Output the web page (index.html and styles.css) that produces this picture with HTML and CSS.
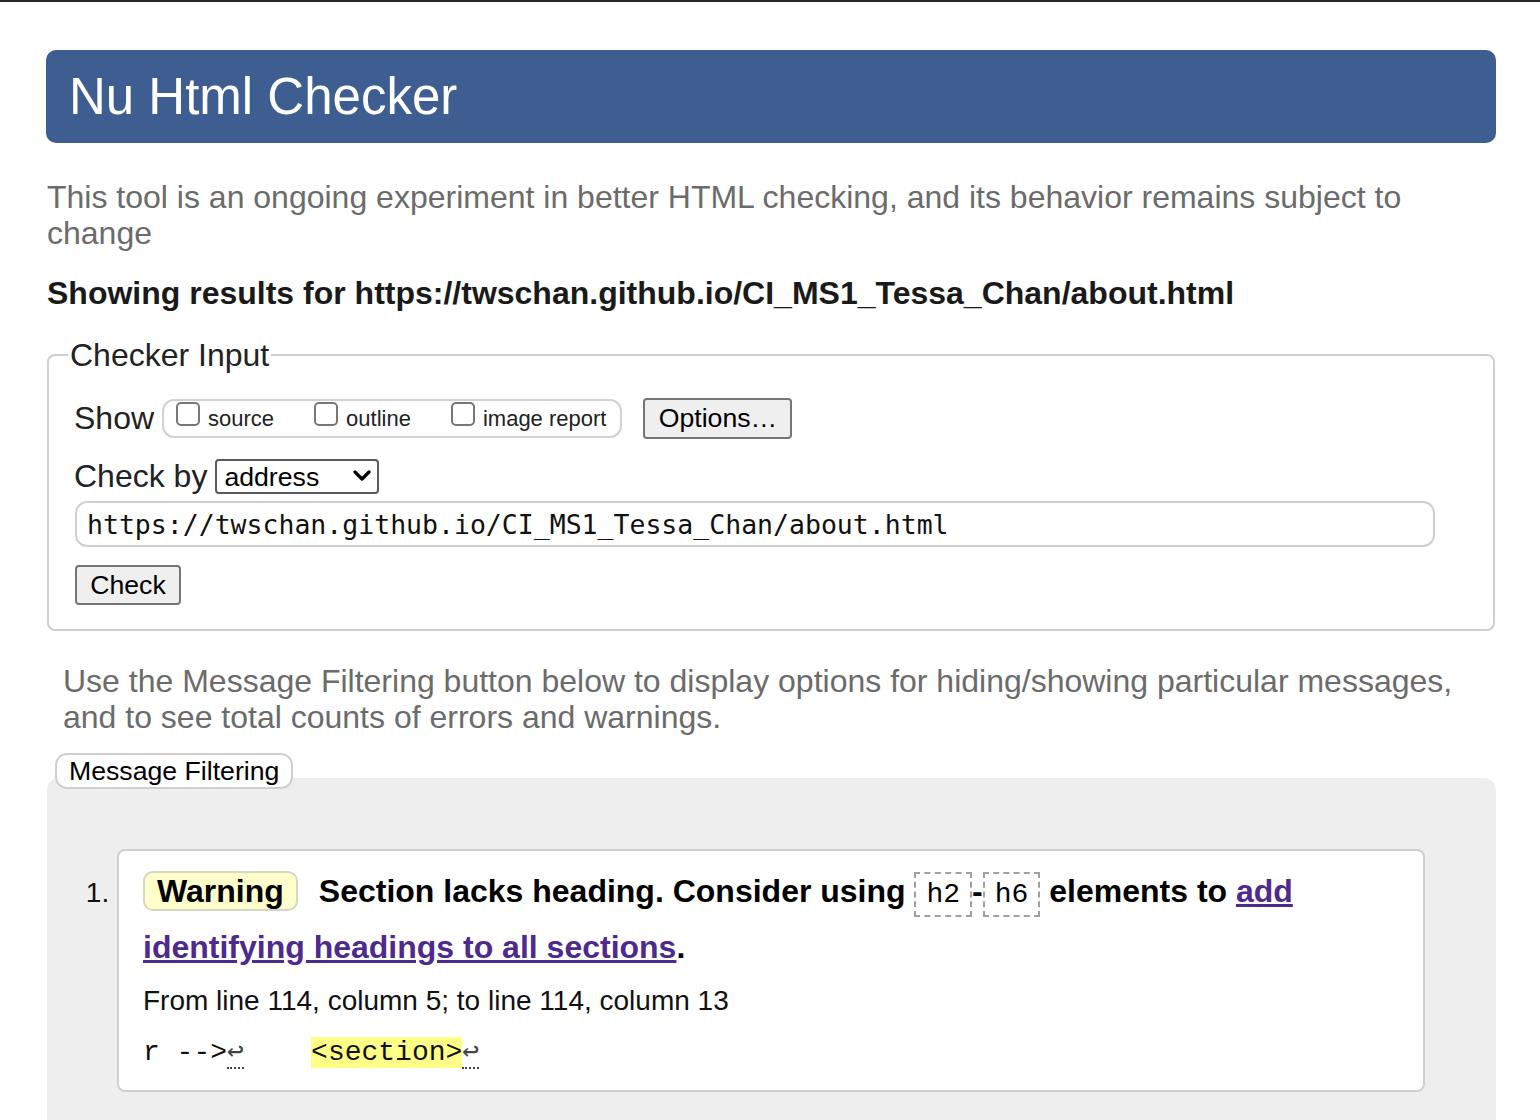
FILE: index.html
```html
<!DOCTYPE html>
<html lang="en">
<head>
<meta charset="utf-8">
<title>Showing results for https://twschan.github.io/CI_MS1_Tessa_Chan/about.html - Nu Html Checker</title>
<link rel="stylesheet" href="styles.css">
</head>
<body>
<div class="page">
  <header class="masthead"><h1>Nu Html Checker</h1></header>
  <p class="intro">This tool is an ongoing experiment in better HTML checking, and its behavior remains subject to change</p>
  <h2 class="results-for">Showing results for https://twschan.github.io/CI_MS1_Tessa_Chan/about.html</h2>
  <form class="checker">
    <fieldset class="input-fs">
      <legend>Checker Input</legend>
      <div class="row show-row">
        <span class="lbl">Show</span>
        <span class="opts">
          <label class="opt"><input type="checkbox"><span>source</span></label>
          <label class="opt"><input type="checkbox"><span>outline</span></label>
          <label class="opt"><input type="checkbox"><span>image report</span></label>
        </span>
        <button type="button" class="btn options">Options…</button>
      </div>
      <div class="row by-row">
        <span class="lbl">Check by</span>
        <span class="select-wrap">
          <select class="by-select"><option>address</option></select>
          <svg class="chev" width="18" height="12" viewBox="0 0 18 12" aria-hidden="true"><path d="M2 2 L9 9 L16 2" fill="none" stroke="#000" stroke-width="3.2" stroke-linecap="round" stroke-linejoin="round"/></svg>
        </span>
      </div>
      <input class="url" type="url" value="https://twschan.github.io/CI_MS1_Tessa_Chan/about.html">
      <button type="button" class="btn check">Check</button>
    </fieldset>
  </form>
  <p class="filter-note">Use the Message Filtering button below to display options for hiding/showing particular messages, and to see total counts of errors and warnings.</p>
  <button type="button" class="filter-btn">Message Filtering</button>
  <section class="results">
    <ol class="msgs">
      <li class="msg">
        <p class="msg-text"><strong class="badge">Warning</strong><span class="text">Section lacks heading. Consider using <code>h2</code>-<code>h6</code> elements to <a href="#">add identifying headings to all sections</a>.</span></p>
        <p class="loc">From line 114, column 5; to line 114, column 13</p>
        <p class="extract"><code>r --&gt;<b class="lf">↩</b>    <mark>&lt;section&gt;</mark><b class="lf">↩</b></code></p>
      </li>
    </ol>
  </section>
</div>
</body>
</html>
```
FILE: styles.css
```css
* { box-sizing: border-box; }
html, body { margin: 0; padding: 0; background: #fff; }
body {
  border-top: 2px solid #262626;
  font-family: "Liberation Sans", Arial, Helvetica, sans-serif;
  color: #222;
  font-size: 32px;
}
.page { margin: 0 44px 0 46px; padding-top: 48px; }

.masthead {
  background: #3e5e91;
  border-radius: 10px;
  height: 93px;
  display: flex;
  align-items: center;
  padding-left: 23px;
}
.masthead h1 { margin: 0; color: #fff; font-weight: normal; font-size: 51px; line-height: 1; }

.intro { margin: 36px 0 0 1px; font-size: 32px; line-height: 36px; color: #6b6b6b; }
.results-for { margin: 24px 0 0 1px; font-size: 32px; line-height: 36px; font-weight: bold; color: #1a1a1a; }

.checker { margin: 26px 1px 0 1px; }
.input-fs {
  margin: 0;
  border: 2px solid #cfcfcf;
  border-radius: 8px;
  padding: 25px 19px 24px 19px;
  min-width: 0;
}
.input-fs legend { padding: 0 2px; font-size: 32px; line-height: 36px; color: #222; }

.row { display: flex; align-items: center; margin-left: 6px; }
.lbl { font-size: 32px; color: #222; }
.show-row { height: 41px; }
.opts {
  display: inline-flex;
  align-items: center;
  height: 39px;
  margin-left: 8px;
  padding: 0 14px 0 12px;
  border: 2px solid #d2d2d2;
  border-radius: 12px;
}
.opt { display: inline-flex; align-items: center; font-size: 22px; color: #222; margin-right: 40px; }
.opt:last-child { margin-right: 0; }
.opt input {
  appearance: none;
  -webkit-appearance: none;
  width: 24px;
  height: 24px;
  margin: 0 8px 10px 0;
  border: 2px solid #777;
  border-radius: 5px;
  background: #fff;
}

.btn {
  font-family: "Liberation Sans", Arial, sans-serif;
  font-size: 26.67px;
  color: #000;
  background: #efefef;
  border: 2px solid #767676;
  border-radius: 4px;
  padding: 0 13px;
}
.options { margin-left: 21px; height: 41px; width: 149px; }

.by-row { margin-top: 20px; height: 35px; }
.select-wrap { position: relative; display: flex; margin-left: 8px; height: 35px; }
.by-select {
  appearance: none;
  -webkit-appearance: none;
  display: block;
  width: 164px;
  height: 35px;
  font-family: "Liberation Sans", Arial, sans-serif;
  font-size: 26.67px;
  color: #000;
  background: #fff;
  border: 2px solid #5a5a5a;
  border-radius: 4px;
  padding: 0 0 0 7px;
}
.chev { position: absolute; right: 8px; top: 11px; pointer-events: none; }

.url {
  display: block;
  margin: 7px 0 0 7px;
  width: 1360px;
  height: 46px;
  border: 2px solid #cfcfcf;
  border-radius: 12px;
  padding: 0 10px;
  font-family: "DejaVu Sans Mono", "Liberation Mono", monospace;
  font-size: 26.5px;
  color: #111;
}
.check { display: block; margin: 18px 0 0 7px; height: 40px; width: 106px; }

.filter-note { margin: 32px 0 0 17px; font-size: 32px; line-height: 36px; color: #6b6b6b; }
.filter-btn {
  position: relative;
  z-index: 1;
  display: block;
  margin: 18px 0 0 9px;
  height: 36px;
  padding: 0 12px;
  font-family: "Liberation Sans", Arial, sans-serif;
  font-size: 26.67px;
  color: #000;
  background: #fff;
  border: 2px solid #cfcfcf;
  border-radius: 12px;
}

.results {
  margin: -11px 0 0 1px;
  background: #eeeeee;
  border-radius: 12px 12px 0 0;
  padding-bottom: 80px;
}
.msgs { margin: 0; padding: 71px 71px 0 70px; }
.msg {
  background: #fff;
  border: 2px solid #cfcfcf;
  border-radius: 8px;
  padding: 12px 24px 21px 24px;
  font-size: 28px;
  color: #111;
}
.msg-text { margin: 0; font-size: 32px; line-height: 56px; font-weight: bold; color: #000; }
.badge {
  display: inline-block;
  line-height: 36px;
  padding: 0 12px;
  margin-right: 21px;
  background: #ffffcc;
  border: 2px solid #d6d6c4;
  border-radius: 10px;
}
.msg-text code {
  font-family: "Liberation Mono", "Courier New", monospace;
  font-weight: normal;
  font-size: 28px;
  line-height: 1;
  padding: 5px 10px;
  border: 2px dashed #a0a0a0;
}
.msg-text a { color: #4e2a8e; }
.loc { margin: 10px 0 0; font-size: 28px; line-height: 32px; color: #111; }
.extract { margin: 18px 0 0; font-size: 28px; line-height: 32px; }
.extract code { font-family: "Liberation Mono", "Courier New", monospace; white-space: pre; color: #111; }
.extract mark { background: #ffff88; color: #111; }
.lf {
  font-family: "DejaVu Sans Mono", monospace;
  font-weight: normal;
  font-size: 28px;
  line-height: 1;
  color: #444;
  border-bottom: 2px dotted #444;
}
```
